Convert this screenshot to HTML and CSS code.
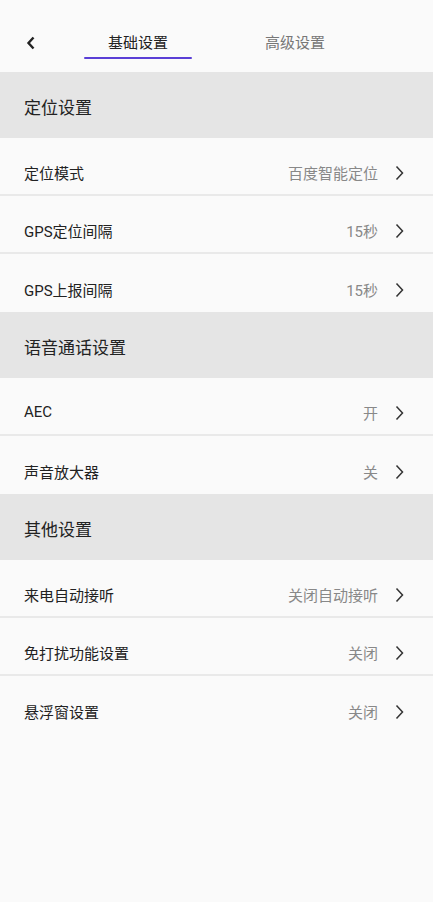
FILE: index.html
```html
<!DOCTYPE html>
<html lang="zh-CN">
<head>
    <meta charset="UTF-8">
    <meta name="viewport" content="width=device-width, initial-scale=1.0">
    <title>设置</title>
    <link rel="stylesheet" href="styles.css">
</head>
<body>
    <div class="page">
        <!-- Top tab bar -->
        <div class="topbar">
            <span class="back">
                <svg width="10" height="14" viewBox="0 0 10 14"><path d="M7.5 1.5 L2.5 7 L7.5 12.5" fill="none" stroke="#222" stroke-width="2.4" stroke-linejoin="miter"/></svg>
            </span>
            <div class="tab active">基础设置</div>
            <div class="tab">高级设置</div>
        </div>

        <div class="section">定位设置</div>
        <div class="row">
            <span class="label">定位模式</span>
            <span class="value">百度智能定位</span>
            <svg class="arrow" width="9" height="16" viewBox="0 0 9 16"><path d="M1.5 1.5 L7.5 8 L1.5 14.5" fill="none" stroke="#333" stroke-width="1.5"/></svg>
        </div>
        <div class="row">
            <span class="label">GPS定位间隔</span>
            <span class="value">15秒</span>
            <svg class="arrow" width="9" height="16" viewBox="0 0 9 16"><path d="M1.5 1.5 L7.5 8 L1.5 14.5" fill="none" stroke="#333" stroke-width="1.5"/></svg>
        </div>
        <div class="row last">
            <span class="label">GPS上报间隔</span>
            <span class="value">15秒</span>
            <svg class="arrow" width="9" height="16" viewBox="0 0 9 16"><path d="M1.5 1.5 L7.5 8 L1.5 14.5" fill="none" stroke="#333" stroke-width="1.5"/></svg>
        </div>

        <div class="section">语音通话设置</div>
        <div class="row">
            <span class="label">AEC</span>
            <span class="value">开</span>
            <svg class="arrow" width="9" height="16" viewBox="0 0 9 16"><path d="M1.5 1.5 L7.5 8 L1.5 14.5" fill="none" stroke="#333" stroke-width="1.5"/></svg>
        </div>
        <div class="row last">
            <span class="label">声音放大器</span>
            <span class="value">关</span>
            <svg class="arrow" width="9" height="16" viewBox="0 0 9 16"><path d="M1.5 1.5 L7.5 8 L1.5 14.5" fill="none" stroke="#333" stroke-width="1.5"/></svg>
        </div>

        <div class="section">其他设置</div>
        <div class="row">
            <span class="label">来电自动接听</span>
            <span class="value">关闭自动接听</span>
            <svg class="arrow" width="9" height="16" viewBox="0 0 9 16"><path d="M1.5 1.5 L7.5 8 L1.5 14.5" fill="none" stroke="#333" stroke-width="1.5"/></svg>
        </div>
        <div class="row">
            <span class="label">免打扰功能设置</span>
            <span class="value">关闭</span>
            <svg class="arrow" width="9" height="16" viewBox="0 0 9 16"><path d="M1.5 1.5 L7.5 8 L1.5 14.5" fill="none" stroke="#333" stroke-width="1.5"/></svg>
        </div>
        <div class="row last">
            <span class="label">悬浮窗设置</span>
            <span class="value">关闭</span>
            <svg class="arrow" width="9" height="16" viewBox="0 0 9 16"><path d="M1.5 1.5 L7.5 8 L1.5 14.5" fill="none" stroke="#333" stroke-width="1.5"/></svg>
        </div>
    </div>
</body>
</html>
```

FILE: styles.css
```css
* {
    box-sizing: border-box;
    margin: 0;
    padding: 0;
}

body {
    font-family: Roboto, "Noto Sans CJK SC", sans-serif;
    background-color: #fafafa;
    color: #222;
}

.page {
    width: 100%;
    min-height: 902px;
    background-color: #fafafa;
}

/* Top bar with tabs */
.topbar {
    height: 72px;
    display: flex;
    align-items: flex-start;
    padding-left: 26px;
}

.back {
    width: 58px;
    display: flex;
    align-items: center;
    height: 14px;
    margin-top: 36px;
}

.tab {
    width: 108px;
    height: 72px;
    line-height: 86px;
    text-align: center;
    font-size: 15px;
    color: #777;
    position: relative;
}

.tab + .tab {
    margin-left: 49px;
}

.tab.active {
    color: #222;
}

.tab.active::after {
    content: "";
    position: absolute;
    left: 0;
    right: 0;
    top: 57px;
    height: 2px;
    background-color: #5a3fd6;
    border-radius: 1px;
}

/* Section header band */
.section {
    height: 66px;
    display: flex;
    align-items: center;
    padding-left: 24px;
    padding-top: 3px;
    background-color: #e5e5e5;
    font-size: 17px;
    color: #222;
}

/* Setting row */
.row {
    height: 58px;
    display: flex;
    align-items: center;
    padding: 12px 29px 0 24px;
    border-bottom: 2px solid #e9e9e9;
    font-size: 15px;
}

.row.last {
    border-bottom: none;
}

.label {
    flex: 1;
    color: #222;
}

.value {
    color: #888;
    margin-right: 17px;
}

.arrow {
    display: block;
    margin-top: 2px;
}
```
